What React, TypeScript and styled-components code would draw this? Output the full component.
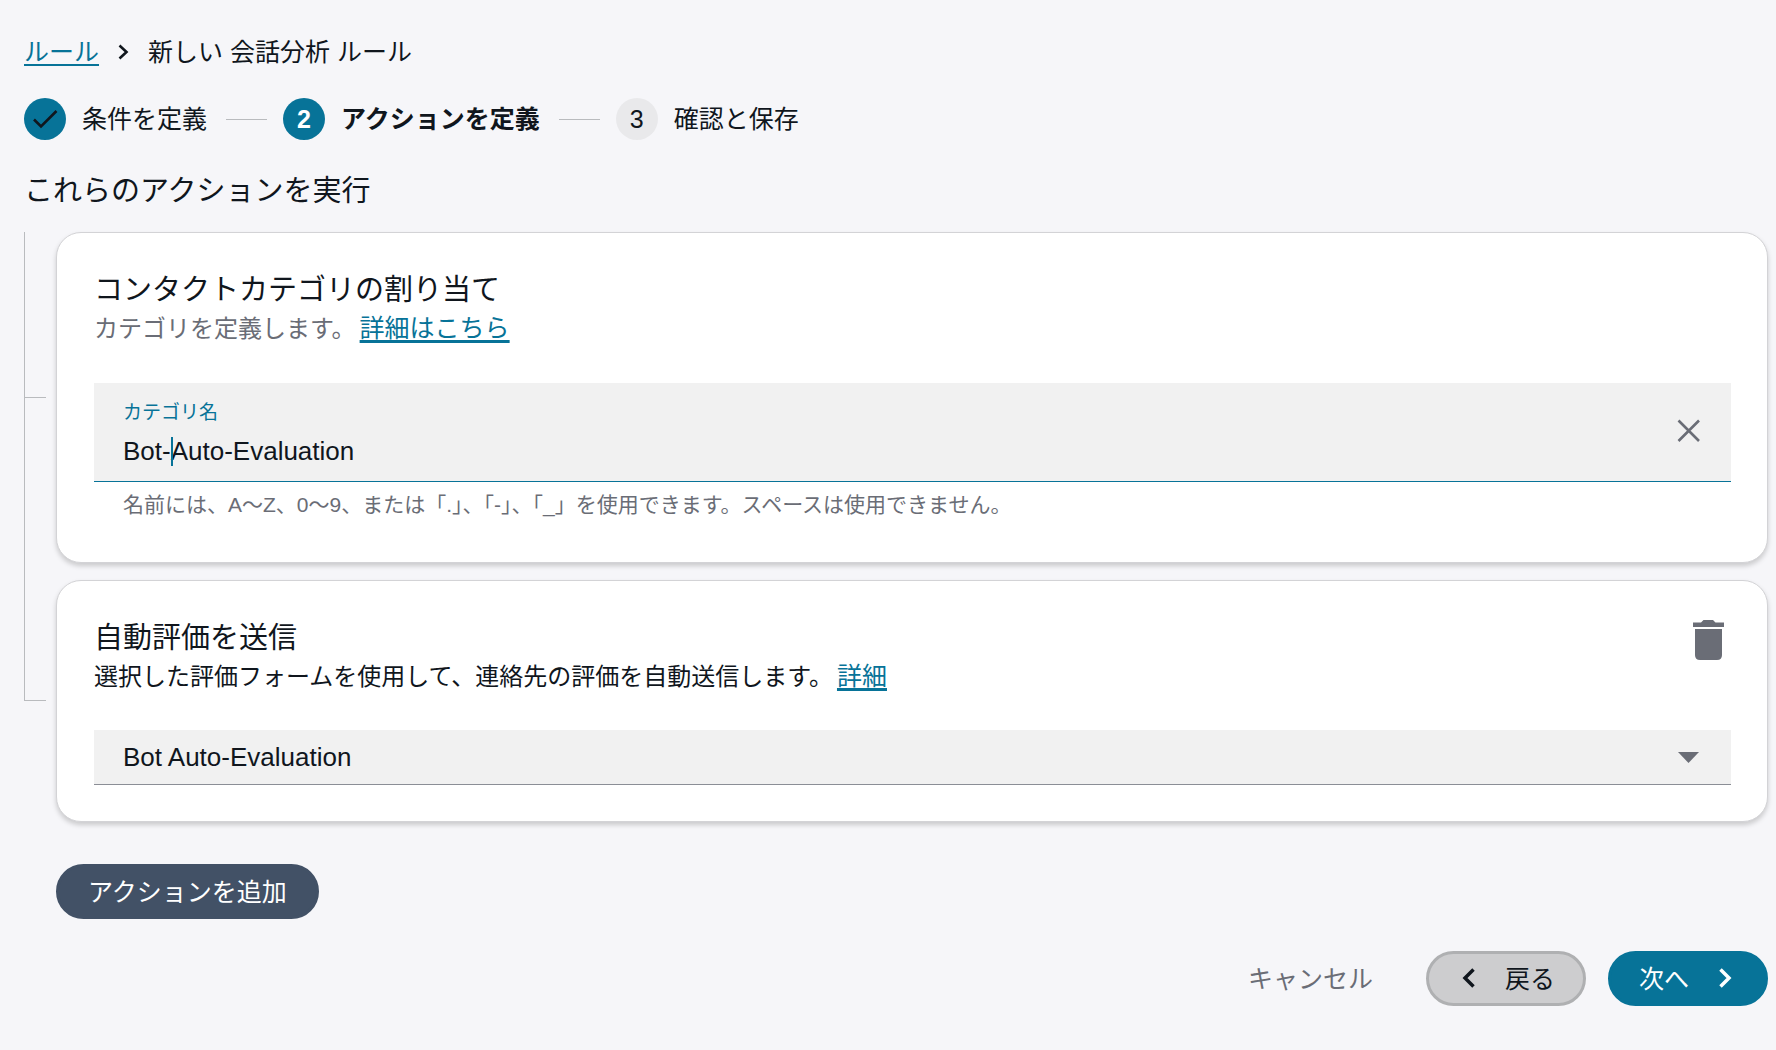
import React, { useState } from "react";
import styled, { createGlobalStyle, css } from "styled-components";

const color = {
  page: "#f6f6f9",
  ink: "#10161d",
  muted: "#6a6d76",
  teal: "#077398",
  slate: "#425166",
  field: "#f1f1f1",
  rule: "#b9bbbe",
  white: "#ffffff",
};

const GlobalStyle = createGlobalStyle`
  *, *::before, *::after { box-sizing: border-box; }
  html, body { margin: 0; background: ${color.page}; }
  body, button, input, select {
    font-family: "Liberation Sans", "Noto Sans CJK JP", sans-serif;
    color: ${color.ink};
  }
  h1, h2, p, ol { margin: 0; padding: 0; font-weight: 400; }
`;

const Page = styled.main`
  padding: 34px 8px 44px 24px;
  font-size: 25px;
`;

const Breadcrumb = styled.nav`
  display: flex;
  align-items: center;
  line-height: 36px;

  svg { margin: 0 19px; }
`;

const TextLink = styled.a<{ $thick?: boolean }>`
  color: ${color.teal};
  font-size: 25px;
  text-decoration: underline;
  text-decoration-thickness: ${(p) => (p.$thick ? 3 : 2)}px;
  text-underline-offset: 3px;
  text-decoration-skip-ink: none;
`;

const Steps = styled.ol`
  display: flex;
  align-items: center;
  margin-top: 28px;
  list-style: none;
`;

const Step = styled.li<{ $current?: boolean }>`
  display: flex;
  align-items: center;
  gap: 16px;
  line-height: 42px;
  font-weight: ${(p) => (p.$current ? 700 : 400)};

  &:not(:first-child)::before {
    content: "";
    width: 41px;
    height: 1px;
    margin-left: 19px;
    background: ${color.rule};
  }
`;

const StepMark = styled.span<{ $state: "done" | "current" | "todo" }>`
  display: flex;
  align-items: center;
  justify-content: center;
  width: 42px;
  height: 42px;
  border-radius: 50%;
  background: ${(p) => (p.$state === "todo" ? "#e9e9eb" : color.teal)};
  color: ${(p) => (p.$state === "current" ? color.white : color.ink)};
`;

const Heading = styled.h1`
  margin-top: 30px;
  font-size: 29px;
  line-height: 42px;
`;

const ActionList = styled.div`
  display: flex;
  flex-direction: column;
  gap: 17px;
  margin-top: 20px;
`;

const ActionRow = styled.div`
  display: grid;
  grid-template-columns: 22px 1fr;
  column-gap: 10px;
`;

const Branch = styled.div<{ $last?: boolean }>`
  display: grid;
  grid-template-rows: 1fr 1fr;

  &::before, &::after {
    content: "";
    border-left: 1px solid ${color.rule};
  }
  &::before { border-bottom: 1px solid ${color.rule}; }
  &::after {
    margin-bottom: -17px;
    ${(p) => p.$last && css`border: 0;`}
  }
`;

const Card = styled.section`
  min-width: 0;
  padding: 37px 36px 36px 37px;
  border: 1px solid #d3d3d6;
  border-radius: 25px;
  background: ${color.white};
  box-shadow: 0 3px 5px rgba(0, 0, 0, 0.18);
`;

const CardHead = styled.div`
  display: flex;
  justify-content: space-between;
  align-items: flex-start;
`;

const CardTitle = styled.h2`
  font-size: 29px;
  line-height: 40px;
`;

const CardText = styled.p<{ $muted?: boolean }>`
  font-size: 24px;
  line-height: 38px;
  color: ${(p) => (p.$muted ? color.muted : color.ink)};

  a {
    margin-left: 4px;
    line-height: 1;
  }
`;

const IconButton = styled.button`
  display: flex;
  flex: none;
  padding: 0;
  border: 0;
  background: none;
  color: ${color.muted};
  cursor: pointer;
`;

const TextField = styled.div`
  display: flex;
  align-items: center;
  justify-content: space-between;
  margin-top: 35px;
  padding: 12px 30px 14px 29px;
  border-bottom: 1px solid ${color.teal};
  background: ${color.field};
`;

const FieldBody = styled.div`
  flex: 1;
  display: flex;
  flex-direction: column;
`;

const FieldLabel = styled.label`
  font-size: 19px;
  line-height: 36px;
  color: ${color.teal};
`;

const InputWrap = styled.div`
  position: relative;
  display: flex;
`;

const Input = styled.input`
  width: 100%;
  height: 36px;
  padding: 5px 0 0;
  border: 0;
  outline: 0;
  background: transparent;
  font-size: 26px;
`;

const Caret = styled.span`
  position: absolute;
  top: 6px;
  left: 48px;
  width: 2px;
  height: 29px;
  background: ${color.teal};
`;

const Helper = styled.p`
  padding: 9px 29px 7px;
  font-size: 21px;
  line-height: 28px;
  color: ${color.muted};
`;

const SelectWrap = styled.div`
  display: grid;
  align-items: center;
  margin-top: 34px;
  border-bottom: 1px solid #8b8e96;
  background: ${color.field};
  color: ${color.muted};

  > * { grid-area: 1 / 1; }
  > svg {
    justify-self: end;
    margin-right: 32px;
    pointer-events: none;
  }
`;

const Select = styled.select`
  width: 100%;
  height: 54px;
  padding: 0 29px;
  border: 0;
  border-radius: 0;
  outline: 0;
  appearance: none;
  background: transparent;
  font-size: 26px;
`;

const Button = styled.button<{ $kind: "dark" | "grey" | "primary" | "plain" }>`
  display: inline-flex;
  align-items: center;
  gap: 24px;
  height: 55px;
  padding: 0 28px 3px;
  border: 3px solid transparent;
  border-radius: 28px;
  font-size: 25px;
  white-space: nowrap;
  cursor: pointer;

  svg { margin-top: 2px; }

  ${(p) => p.$kind === "dark" && css`
    padding: 0 29px 3px;
    border-color: ${color.slate};
    background: ${color.slate};
    color: ${color.white};
  `}
  ${(p) => p.$kind === "grey" && css`
    border-color: #afb0b2;
    background: #cdcdcf;
  `}
  ${(p) => p.$kind === "primary" && css`
    border-color: ${color.teal};
    background: ${color.teal};
    color: ${color.white};
  `}
  ${(p) => p.$kind === "plain" && css`
    background: none;
    color: ${color.muted};
  `}
`;

const AddRow = styled.div`
  margin-top: 42px;
  padding-left: 32px;
  display: flex;
`;

const Footer = styled.footer`
  display: flex;
  justify-content: flex-end;
  gap: 22px;
  margin-top: 32px;
`;

function Chevron({ left }: { left?: boolean }) {
  return (
    <svg width="24" height="24" viewBox="0 0 24 24" fill="none" stroke="currentColor" strokeWidth="3.5" aria-hidden="true">
      <path d={left ? "M16.5 3.5L8 12L16.5 20.5" : "M7.5 3.5L16 12L7.5 20.5"} />
    </svg>
  );
}

function CheckIcon() {
  return (
    <svg width="26" height="22" viewBox="0 0 26 22" fill="none" stroke="currentColor" strokeWidth="2.6" aria-hidden="true">
      <path d="M2 11.5L9 18.5L24.5 3" />
    </svg>
  );
}

function CloseIcon() {
  return (
    <svg width="24" height="24" viewBox="0 0 24 24" fill="none" stroke="currentColor" strokeWidth="2.6" aria-hidden="true">
      <path d="M1.5 1.5L22 22M22 1.5L1.5 22" />
    </svg>
  );
}

function TrashIcon() {
  return (
    <svg width="44" height="44" viewBox="0 0 44 44" fill="currentColor" aria-hidden="true">
      <path d="M6 4.5H14L16.5 2H26L28.5 4.5H37V9H6Z" />
      <path d="M8 11H35V37Q35 42 30 42H13Q8 42 8 37Z" />
    </svg>
  );
}

export default function App() {
  const [name, setName] = useState("Bot-Auto-Evaluation");

  return (
    <Page>
      <GlobalStyle />
      <Breadcrumb>
        <TextLink href="#rules">ルール</TextLink>
        <svg width="11" height="16" viewBox="0 0 11 16" fill="none" stroke="currentColor" strokeWidth="2.6" aria-hidden="true">
          <path d="M1.5 1.5L8.5 8L1.5 14.5" />
        </svg>
        <span>新しい 会話分析 ルール</span>
      </Breadcrumb>

      <Steps>
        <Step>
          <StepMark $state="done"><CheckIcon /></StepMark>
          条件を定義
        </Step>
        <Step $current aria-current="step">
          <StepMark $state="current">2</StepMark>
          アクションを定義
        </Step>
        <Step>
          <StepMark $state="todo">3</StepMark>
          確認と保存
        </Step>
      </Steps>

      <Heading>これらのアクションを実行</Heading>

      <ActionList>
        <ActionRow>
          <Branch />
          <Card>
            <CardTitle>コンタクトカテゴリの割り当て</CardTitle>
            <CardText $muted>
              カテゴリを定義します。
              <TextLink $thick href="#category-help">詳細はこちら</TextLink>
            </CardText>
            <TextField>
              <FieldBody>
                <FieldLabel htmlFor="category">カテゴリ名</FieldLabel>
                <InputWrap>
                  <Input id="category" value={name} onChange={(e) => setName(e.target.value)} />
                  <Caret />
                </InputWrap>
              </FieldBody>
              <IconButton type="button" aria-label="クリア" onClick={() => setName("")}>
                <CloseIcon />
              </IconButton>
            </TextField>
            <Helper>名前には、A〜Z、0〜9、または「.」、「-」、「_」を使用できます。スペースは使用できません。</Helper>
          </Card>
        </ActionRow>

        <ActionRow>
          <Branch $last />
          <Card>
            <CardHead>
              <div>
                <CardTitle>自動評価を送信</CardTitle>
                <CardText>
                  選択した評価フォームを使用して、連絡先の評価を自動送信します。
                  <TextLink $thick href="#evaluation-help">詳細</TextLink>
                </CardText>
              </div>
              <IconButton type="button" aria-label="削除">
                <TrashIcon />
              </IconButton>
            </CardHead>
            <SelectWrap>
              <Select aria-label="評価フォーム" defaultValue="bot">
                <option value="bot">Bot Auto-Evaluation</option>
              </Select>
              <svg width="21" height="11" viewBox="0 0 21 11" fill="currentColor" aria-hidden="true">
                <path d="M0 0H21L10.5 11Z" />
              </svg>
            </SelectWrap>
          </Card>
        </ActionRow>
      </ActionList>

      <AddRow>
        <Button type="button" $kind="dark">アクションを追加</Button>
      </AddRow>

      <Footer>
        <Button type="button" $kind="plain">キャンセル</Button>
        <Button type="button" $kind="grey"><Chevron left />戻る</Button>
        <Button type="button" $kind="primary">次へ<Chevron /></Button>
      </Footer>
    </Page>
  );
}
